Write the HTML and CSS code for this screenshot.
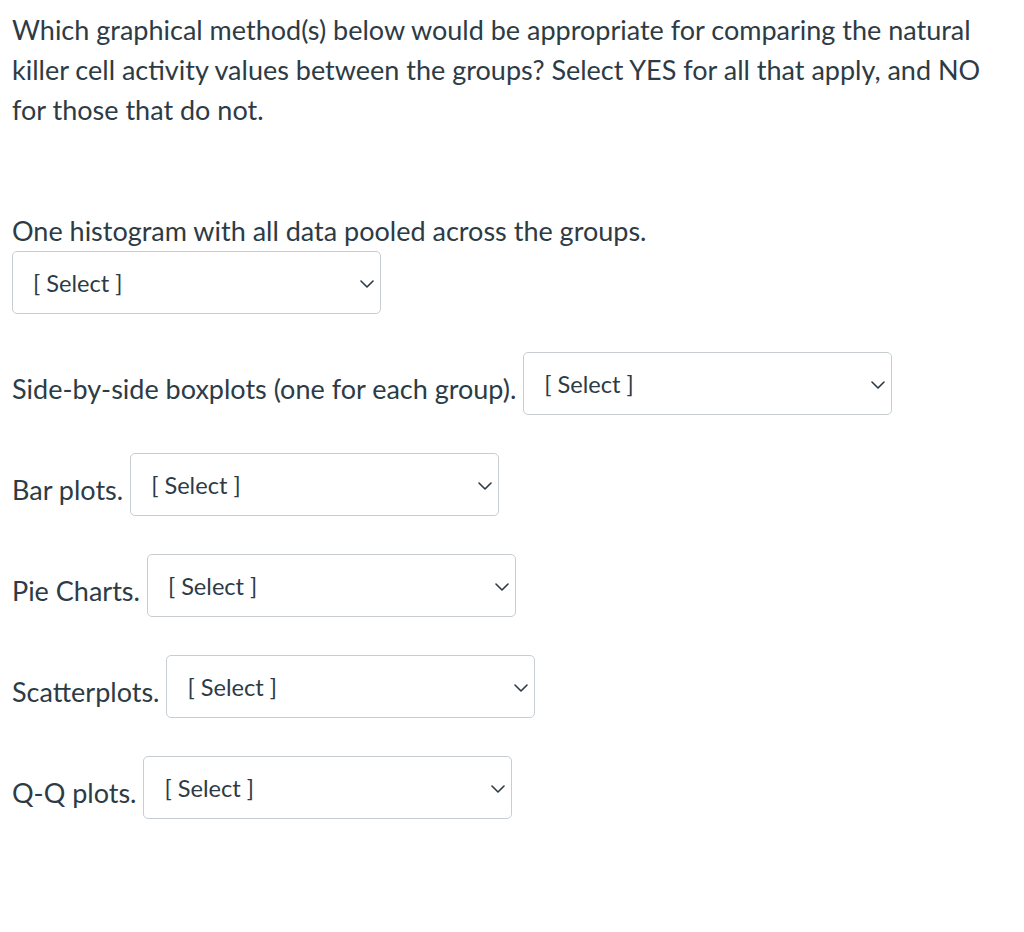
FILE: index.html
```html
<!DOCTYPE html>
<html lang="en">
<head>
<meta charset="utf-8">
<title>Question</title>
<link rel="stylesheet" href="styles.css">
</head>
<body>
<div class="page">
  <p class="question">Which graphical method(s) below would be appropriate for comparing the natural killer cell activity values between the groups? Select YES for all that apply, and NO for those that do not.</p>

  <div class="stacked">
    <div class="label-line">One histogram with all data pooled across the groups.</div>
    <div class="select">
      <span class="select-text">[ Select ]</span>
      <svg class="chev" viewBox="0 0 14 8" width="14" height="8"><path d="M1 1 L7 7 L13 1" fill="none" stroke="#2d3b45" stroke-width="1.6" stroke-linecap="round" stroke-linejoin="round"/></svg>
    </div>
  </div>

  <div class="row">
    <span class="label">Side-by-side boxplots (one for each group).</span>
    <div class="select">
      <span class="select-text">[ Select ]</span>
      <svg class="chev" viewBox="0 0 14 8" width="14" height="8"><path d="M1 1 L7 7 L13 1" fill="none" stroke="#2d3b45" stroke-width="1.6" stroke-linecap="round" stroke-linejoin="round"/></svg>
    </div>
  </div>

  <div class="row">
    <span class="label">Bar plots.</span>
    <div class="select">
      <span class="select-text">[ Select ]</span>
      <svg class="chev" viewBox="0 0 14 8" width="14" height="8"><path d="M1 1 L7 7 L13 1" fill="none" stroke="#2d3b45" stroke-width="1.6" stroke-linecap="round" stroke-linejoin="round"/></svg>
    </div>
  </div>

  <div class="row">
    <span class="label">Pie Charts.</span>
    <div class="select">
      <span class="select-text">[ Select ]</span>
      <svg class="chev" viewBox="0 0 14 8" width="14" height="8"><path d="M1 1 L7 7 L13 1" fill="none" stroke="#2d3b45" stroke-width="1.6" stroke-linecap="round" stroke-linejoin="round"/></svg>
    </div>
  </div>

  <div class="row">
    <span class="label">Scatterplots.</span>
    <div class="select">
      <span class="select-text">[ Select ]</span>
      <svg class="chev" viewBox="0 0 14 8" width="14" height="8"><path d="M1 1 L7 7 L13 1" fill="none" stroke="#2d3b45" stroke-width="1.6" stroke-linecap="round" stroke-linejoin="round"/></svg>
    </div>
  </div>

  <div class="row">
    <span class="label">Q-Q plots.</span>
    <div class="select">
      <span class="select-text">[ Select ]</span>
      <svg class="chev" viewBox="0 0 14 8" width="14" height="8"><path d="M1 1 L7 7 L13 1" fill="none" stroke="#2d3b45" stroke-width="1.6" stroke-linecap="round" stroke-linejoin="round"/></svg>
    </div>
  </div>
</div>
</body>
</html>
```

FILE: styles.css
```css
html, body {
  margin: 0;
  padding: 0;
  background: #ffffff;
}

body {
  font-family: Lato, "Open Sans", "Liberation Sans", sans-serif;
  color: #2d3b45;
}

.page {
  width: 1000px;
  padding: 10px 12px;
}

.question {
  margin: 0;
  font-size: 27px;
  line-height: 40px;
}

.stacked {
  margin-top: 81px;
}

.label-line {
  font-size: 27px;
  line-height: 40px;
}

.row {
  display: flex;
  align-items: flex-start;
  gap: 7px;
  margin-top: 38px;
}

.label {
  font-size: 27px;
  line-height: 40px;
  padding-top: 17px;
  white-space: nowrap;
}

.select {
  box-sizing: border-box;
  width: 369px;
  height: 63px;
  border: 1px solid #c7cdd1;
  border-radius: 5px;
  display: flex;
  align-items: center;
  justify-content: space-between;
  padding: 0 6px 0 20px;
  background: #ffffff;
}

.select-text {
  font-size: 23.6px;
  line-height: 30px;
  color: #2d3b45;
}

.chev {
  display: block;
  margin-top: 2px;
}
```
